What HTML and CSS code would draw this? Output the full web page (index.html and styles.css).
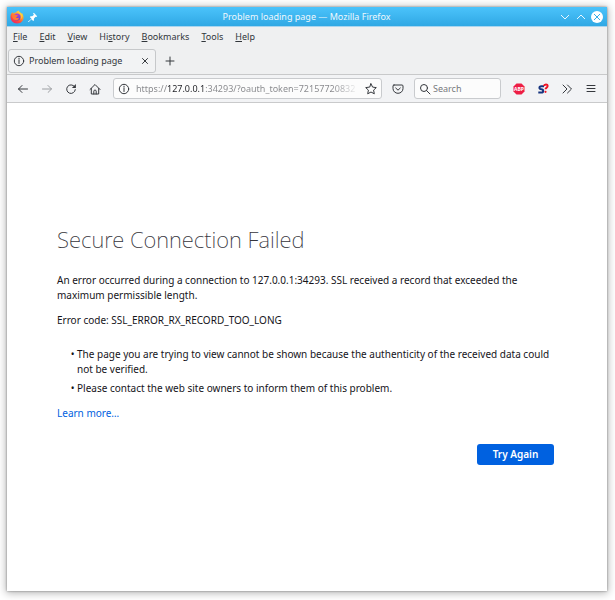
FILE: index.html
```html
<!DOCTYPE html>
<html lang="en">
<head>
<meta charset="utf-8">
<meta name="viewport" content="width=device-width, initial-scale=1">
<title>Problem loading page</title>
<link rel="stylesheet" href="styles.css">
</head>
<body>
<div class="window">
  <header class="titlebar">
    <div class="title-left">
      <svg class="firefox" viewBox="0 0 28 28" aria-hidden="true">
        <defs>
          <linearGradient id="fire" x1="0.8" y1="0" x2="0.2" y2="1">
            <stop offset="0" stop-color="#ffe64a"/><stop offset="0.35" stop-color="#ffa02c"/><stop offset="0.7" stop-color="#ff4b3e"/><stop offset="1" stop-color="#e8206e"/>
          </linearGradient>
          <linearGradient id="globe" x1="0.5" y1="0" x2="0.5" y2="1">
            <stop offset="0" stop-color="#b140d8"/><stop offset="1" stop-color="#5b45d6"/>
          </linearGradient>
        </defs>
        <path fill="url(#fire)" d="M17 1c1 3 4 4 6 7l1-2c3 4 4 10 2 14-2 5-7 7-12 7C6 27 1 21 1 14c0-4 1-7 4-10l1 3c2-2 4-2 6-2 1-2 3-3 5-4z"/>
        <circle cx="14" cy="14" r="7" fill="url(#globe)"/>
        <path fill="#ff7a34" d="M4 11c3-3 6-3 8-1l4 1c0 2-3 2-4 4 2 2 5 1 6 0 0 4-3 6-7 5-4 0-7-4-7-9z"/>
        <path fill="#ffcf3d" d="M17 4c5 4 7 9 4 15 4-3 5-8 2-12-2-2-5-3-6-6z"/>
      </svg>
      <svg class="pin" viewBox="0 0 12 12" aria-hidden="true"><path fill="#fff" d="M7 1l4 4-1 1-1-.2-2 2.200.2 1.800-1 1-2-2-3.400 3.200-.8.200.2-.8L4.200 8l-2-2 1-1 1.800.2 2.200-2L6 2z"/></svg>
    </div>
    <span class="title-text">Problem loading page — Mozilla Firefox</span>
    <div class="title-right">
      <button class="win-btn" aria-label="Minimize"><svg viewBox="0 0 12 12"><path d="M2 4l4 4 4-4"/></svg></button>
      <button class="win-btn" aria-label="Maximize"><svg viewBox="0 0 12 12"><path d="M2 8l4-4 4 4"/></svg></button>
      <button class="win-btn win-close" aria-label="Close"><svg viewBox="0 0 12 12"><path d="M3 3l6 6M9 3l-6 6"/></svg></button>
    </div>
  </header>

  <nav class="menubar">
    <button><u>F</u>ile</button>
    <button><u>E</u>dit</button>
    <button><u>V</u>iew</button>
    <button>Hi<u>s</u>tory</button>
    <button><u>B</u>ookmarks</button>
    <button><u>T</u>ools</button>
    <button><u>H</u>elp</button>
  </nav>

  <div class="tabs">
    <div class="tab">
      <svg class="icon info" viewBox="0 0 12 12" aria-hidden="true"><circle cx="6" cy="6" r="4.700"/><path d="M6 5.300v3.200M6 3.200v1"/></svg>
      <span class="tab-title">Problem loading page</span>
      <button class="tab-close" aria-label="Close tab"><svg class="icon" viewBox="0 0 12 12"><path d="M3.500 3.500l5 5M8.500 3.500l-5 5"/></svg></button>
    </div>
    <button class="tool" aria-label="New tab"><svg class="icon" viewBox="0 0 12 12"><path d="M6 2v8M2 6h8"/></svg></button>
  </div>

  <div class="toolbar">
    <button class="tool" aria-label="Back"><svg class="icon" viewBox="0 0 12 12"><path d="M10.500 6h-9M5 2.500L1.500 6 5 9.500"/></svg></button>
    <button class="tool" aria-label="Forward" disabled><svg class="icon" viewBox="0 0 12 12"><path d="M1.500 6h9M7 2.500L10.500 6 7 9.500"/></svg></button>
    <button class="tool" aria-label="Reload"><svg class="icon" viewBox="0 0 12 12"><path d="M9.500 3.600A4.300 4.300 0 1 0 10.300 6.600"/><path class="solid" d="M10.900 1v4H6.900z"/></svg></button>
    <button class="tool" aria-label="Home"><svg class="icon" viewBox="0 0 12 12"><path d="M1 6.500L6 1.500l5 5M2.300 5.500v5.500h7.400V5.500M4.800 11V8.200c0-1.600 2.400-1.600 2.400 0V11"/></svg></button>
    <div class="field url">
      <svg class="icon info" viewBox="0 0 12 12" aria-hidden="true"><circle cx="6" cy="6" r="4.700"/><path d="M6 5.300v3.200M6 3.200v1"/></svg>
      <input class="url-input" type="text" aria-label="Address" value="https://127.0.0.1:34293/?oauth_token=72157720832">
      <button class="star" aria-label="Bookmark this page"><svg class="icon" viewBox="0 0 12 12"><path d="M6 .8l1.600 3.300 3.700.5-2.700 2.500.7 3.700L6 9l-3.300 1.800.7-3.700L.7 4.600l3.700-.5z"/></svg></button>
    </div>
    <button class="tool pocket" aria-label="Save to Pocket"><svg class="icon" viewBox="0 0 12 12"><path d="M2 2h8q1 0 1 1v2.500a5 4.800 0 0 1-10 0V3q0-1 1-1zM3.700 5L6 7.200 8.300 5"/></svg></button>
    <div class="field search">
      <svg class="icon" viewBox="0 0 12 12" aria-hidden="true"><circle cx="5" cy="5" r="3.500"/><path d="M7.600 7.600L11 11"/></svg>
      <input type="search" aria-label="Search" placeholder="Search">
    </div>
    <div class="extensions">
      <button class="tool" aria-label="Adblock Plus"><svg class="abp" viewBox="0 0 24 24"><path fill="#ed1e45" d="M7 1h10l6 6v10l-6 6H7l-6-6V7z"/><text x="12" y="16" text-anchor="middle">ABP</text></svg></button>
      <button class="tool" aria-label="Stylish"><svg class="stylish" viewBox="0 0 12 12"><path class="s" d="M7 3.300H4.300C1.800 3.300 1.800 6.300 4.300 6.300s2.500 3.200 0 3.200H1.300"/><path class="q" d="M7 3c.3-2 3.700-2.200 3.600 0 0 1.700-2 1.700-2 3.200"/><circle cx="8.500" cy="8.800" r="1.100" fill="#f01424"/></svg></button>
      <button class="tool" aria-label="More tools"><svg class="icon" viewBox="0 0 12 12"><path d="M2 2l4 4-4 4M6.500 2l4 4-4 4"/></svg></button>
      <button class="tool" aria-label="Application menu"><svg class="icon" viewBox="0 0 12 12"><path d="M2 2.500h8M2 5.500h8M2 8.500h8"/></svg></button>
    </div>
  </div>

  <main class="page">
    <h1>Secure Connection Failed</h1>
    <p>An error occurred during a connection to 127.0.0.1:34293. SSL received a record that exceeded the maximum permissible length.</p>
    <p>Error code: SSL_ERROR_RX_RECORD_TOO_LONG</p>
    <ul>
      <li>The page you are trying to view cannot be shown because the authenticity of the received data could not be verified.</li>
      <li>Please contact the web site owners to inform them of this problem.</li>
    </ul>
    <a href="#learn-more">Learn more…</a>
    <div class="actions"><button class="primary">Try Again</button></div>
  </main>
</div>
</body>
</html>
```
FILE: styles.css
```css
* { box-sizing: border-box; }

body {
  margin: 0;
  padding: 7px 8px 9px 7px;
  min-height: 100vh;
  display: flex;
  background: #fff;
  color: #15141a;
  font-family: "Noto Sans", "Open Sans", sans-serif;
  font-size: 10px;
}

button, input { font: inherit; color: inherit; }

button {
  padding: 0;
  border: 0;
  background: none;
}

svg { display: block; }

.window {
  flex: 1;
  min-width: 0;
  display: flex;
  flex-direction: column;
  background: #fff;
  box-shadow: 0 0 2px rgba(0, 0, 0, .4), 0 1px 8px 1px rgba(0, 0, 0, .3);
}

.titlebar {
  height: 20px;
  display: grid;
  grid-template-columns: 1fr auto 1fr;
  align-items: center;
  padding: 0 4px 0 3px;
  border-bottom: 1px solid #a9d5ef;
  background: linear-gradient(#4bc3fb, #30a8e4);
}

.title-left, .title-right { display: flex; align-items: center; }
.title-left { gap: 4px; }
.title-right { justify-content: flex-end; gap: 4px; }
.title-text { color: #eef8fd; font-size: 9px; line-height: 16px; }
.firefox { width: 14px; height: 14px; }
.pin { width: 10px; height: 10px; }

.win-btn {
  width: 12px;
  height: 12px;
  border-radius: 50%;
}
.win-btn svg { width: 12px; height: 12px; fill: none; stroke: #eaf7fe; }
.win-close { background: #fff; }
.win-close svg { stroke: #35ade9; }

.menubar {
  height: 20px;
  display: flex;
  align-items: center;
  gap: 12px;
  padding: 0 6px 2px;
  background: #eff0f1;
  color: #31363b;
  font-size: 9px;
}
.menubar u { text-underline-offset: 1px; }

.tabs {
  height: 28px;
  display: flex;
  align-items: center;
  gap: 4px;
  padding: 0 1px;
  background: #eff0f1;
  border-bottom: 1px solid #c8c9ca;
  color: #31363b;
}

.tab {
  width: 148px;
  height: 24px;
  display: flex;
  align-items: center;
  gap: 4px;
  padding: 0 4px;
  border: 1px solid #c6c8ca;
  border-radius: 3px;
  background: #f2f3f4;
}
.tab-title { flex: 1; white-space: nowrap; font-size: 9px; }

.icon {
  width: 12px;
  height: 12px;
  flex: none;
  fill: none;
  stroke: #35383d;
  stroke-linecap: round;
  stroke-linejoin: round;
}
.icon .solid { fill: #35383d; stroke: none; }

.tool {
  width: 20px;
  height: 20px;
  flex: none;
  display: grid;
  place-items: center;
}
.tool:disabled { opacity: .45; }

.toolbar {
  height: 28px;
  display: flex;
  align-items: center;
  gap: 4px;
  padding: 0 6px;
  background: #f2f3f5;
  border-bottom: 1px solid #c9cacb;
}

.field {
  height: 21px;
  display: flex;
  align-items: center;
  gap: 6px;
  padding: 0 4px;
  border: 1px solid #c9cbce;
  border-radius: 3px;
  background: #fcfcfc;
}
.field input {
  flex: 1;
  min-width: 0;
  padding: 0;
  border: 0;
  outline: 0;
  background: none;
  font-size: 9px;
}
.url { flex: 1; min-width: 0; margin-left: 4px; }
.search { width: 87px; margin-left: 2px; gap: 2px; }
.search input::placeholder { color: #77797c; opacity: 1; }

/* Only the host stands out; the rest of the address is dimmed and fades at the end. */
.field .url-input {
  color: transparent;
  background: linear-gradient(to right, #85868a 31px, #202126 31px 70px, #85868a 70px calc(100% - 26px), transparent) text;
}
.pocket { margin-left: 2px; }

.extensions { display: flex; gap: 4px; margin-left: 4px; }
.abp { width: 12px; height: 12px; }
.abp text { fill: #fff; font-size: 10px; font-weight: 700; }
.stylish { width: 12px; height: 12px; fill: none; stroke-width: 2; }
.stylish .s { stroke: #16347f; }
.stylish .q { stroke: #f01424; }

.page {
  flex: 1;
  padding: 120px 53px 0 50px;
  line-height: 15px;
}
.page h1 {
  margin: 0 0 18px;
  color: #36353c;
  font-size: 22px;
  font-weight: 200;
  line-height: 32px;
}
.page p { margin: 0 0 10px; }
.page ul {
  margin: 19px 0 10px;
  padding-left: 20px;
  list-style-type: "•\00a0 ";
}
.page li + li { margin-top: 4px; }
.page a { color: #0061e0; text-decoration: none; }

.actions { display: flex; justify-content: flex-end; margin-top: 23px; }
.primary {
  min-width: 77px;
  height: 21px;
  border-radius: 3px;
  background: #0061e0;
  color: #fff;
  font-weight: 600;
}
```
